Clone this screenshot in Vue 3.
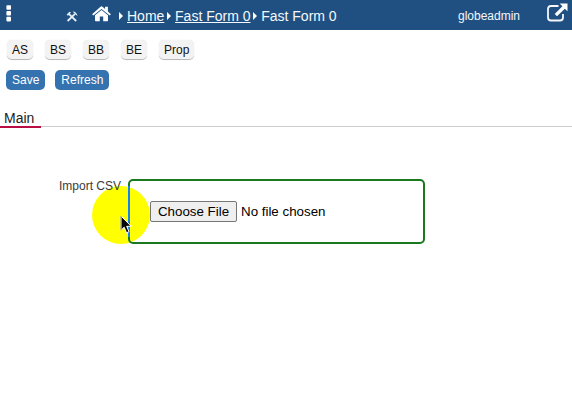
<script setup>
const tools = ['AS', 'BS', 'BB', 'BE', 'Prop']
const actions = ['Save', 'Refresh']
</script>

<template>
  <div class="page">
    <header class="topbar">
      <svg class="dots" width="6" height="18" viewBox="0 0 6 18">
        <rect x="0.4" y="0.2" width="4.6" height="4.6" rx=".8" />
        <rect x="0.4" y="6" width="4.6" height="4.6" rx=".8" />
        <rect x="0.4" y="11.8" width="4.6" height="4.6" rx=".8" />
      </svg>
      <svg class="hammer" width="12" height="11" viewBox="0 0 12 11">
        <path d="M2.8 2.8 10.2 10M9 2.8 1.6 10" fill="none" stroke="#e6f0f8" stroke-width="1.8" />
        <path d="M.6 3.7 3.4.7 5 1.6 2 4.8zM6.6.5C9 .4 11.2 2.2 11.5 5L9.6 3.4 8.3 2.2z" fill="#e6f0f8" />
      </svg>
      <svg class="home" width="19" height="16" viewBox="0 0 19 16">
        <path d="M9.5 4 16 9.3V14.4Q16 15.2 15.2 15.2H11.2V10.6H7.8V15.2H3.8Q3 15.2 3 14.4V9.3z" />
        <path d="M.1 8.2 8.5.7Q9.5 0 10.5.7L13.1 3V.7H15.9V5.4L18.9 8.2 17.7 9.6 9.5 2.9 1.3 9.6z" />
      </svg>
      <nav class="crumbs">
        <i class="arrow" /><a class="link">Home</a>
        <i class="arrow" /><a class="link">Fast Form 0</a>
        <i class="arrow" /><span>Fast Form 0</span>
      </nav>
      <span class="user">globeadmin</span>
      <svg class="external" width="21" height="19" viewBox="0 0 21 19">
        <path d="M11.5 3H4Q1 3 1 6V14.5Q1 17.5 4 17.5H13Q16 17.5 16 14.5V11" fill="none" stroke="#f4f8fc" stroke-width="1.8" />
        <path d="M12.7.5H20.5V8.3L17.8 5.7 10 13.3 7.7 11 15.4 3.2z" fill="#fff" />
      </svg>
    </header>

    <div class="tools">
      <button v-for="t in tools" :key="t" class="tool">{{ t }}</button>
    </div>
    <div class="actions">
      <button v-for="a in actions" :key="a" class="action">{{ a }}</button>
    </div>

    <div class="tabs"><div class="tab">Main</div></div>

    <div class="form">
      <i class="halo" />
      <label class="label">Import CSV</label>
      <div class="drop">
        <button class="choose">Choose File</button>
        <span class="status">No file chosen</span>
      </div>
      <svg class="cursor" width="13" height="20" viewBox="0 0 13 20">
        <path d="M1 1V15.2L4.2 12.2 6.5 17.8 9 16.7 6.7 11.3H11.2z" fill="#080808" stroke="#fff" stroke-width="1" />
        <path d="M1 1V15.2" stroke="#8a8a60" stroke-width="1" />
      </svg>
    </div>
  </div>
</template>

<style>
body { margin: 0; background: #fff; }
</style>

<style scoped>
.page {
  width: 572px;
  height: 416px;
  overflow: hidden;
  background: #fff;
  font-family: "Liberation Sans", Arial, sans-serif;
  color: #111;
  white-space: nowrap;
}
button { font-family: inherit; margin: 0; box-sizing: border-box; flex: none; }
svg { display: block; flex: none; }
.topbar {
  display: flex;
  align-items: flex-start;
  box-sizing: border-box;
  height: 30px;
  background: #205081;
  color: #f4f8fc;
}
.dots { margin: 5px 0 0 6px; fill: #fff; }
.hammer { margin: 11px 0 0 54px; }
.home { margin: 6px 0 0 14px; fill: #fff; }
.crumbs {
  display: flex;
  align-items: center;
  width: 339px;
  margin: 8px 0 0 8px;
  font-size: 14px;
  line-height: 16px;
}
.arrow {
  width: 0;
  height: 0;
  margin-right: 4px;
  border-left: 4px solid #fff;
  border-top: 4px solid transparent;
  border-bottom: 4px solid transparent;
}
.link {
  margin-right: 2.7px;
  text-decoration: underline;
}
.user { width: 62px; margin-top: 9px; font-size: 12px; line-height: 14px; }
.external { margin: 3px 0 0 27px; }
.tools { display: flex; gap: 12px; padding: 10px 0 0 7px; }
.tool {
  min-width: 26px;
  height: 20px;
  padding: 1px 5px 0;
  border: 0;
  border-bottom: 1px solid #b9b9b9;
  border-radius: 5px;
  background: #f3f3f3;
  box-shadow: 0 0 1px #d8d8d8;
  font-size: 12px;
  line-height: 18px;
  color: #111;
}
.actions { display: flex; gap: 10px; padding: 10px 0 0 6px; }
.action {
  height: 20px;
  padding: 0 6px;
  border: 0;
  border-radius: 5px;
  background: #3572b0;
  color: #fff;
  font-size: 12px;
  line-height: 20px;
}
.tabs { display: flex; height: 17px; margin-top: 19px; border-bottom: 1px solid #ccc; }
.tab {
  box-sizing: border-box;
  width: 41px;
  height: 19px;
  padding-left: 4px;
  border-bottom: 2px solid #b90e44;
  font-size: 14px;
  line-height: 18px;
  color: #222;
}
.form { position: relative; display: flex; padding: 52px 0 0 59px; }
.halo {
  position: absolute;
  left: 92px;
  top: 59px;
  width: 58px;
  height: 58px;
  border-radius: 50%;
  background: #ff0;
}
.label {
  position: relative;
  width: 69px;
  font-size: 12px;
  line-height: 14px;
  color: #3a3a3a;
}
.drop {
  position: relative;
  display: flex;
  align-items: center;
  box-sizing: border-box;
  width: 297px;
  height: 65px;
  padding-left: 20px;
  border: 2px solid #187a1c;
  border-radius: 5px;
  font-size: 13.333px;
}
.drop::before {
  content: "";
  position: absolute;
  left: -2px;
  top: 5px;
  bottom: 5px;
  width: 2px;
  background: #1283f0;
}
.choose {
  width: 87px;
  height: 21px;
  padding: 0;
  border: 1px solid #767676;
  border-radius: 2px;
  background: #efefef;
  color: #000;
  font-size: 13.333px;
}
.status { margin-left: 4px; color: #000; }
.cursor { position: absolute; left: 120px; top: 88px; }
</style>
